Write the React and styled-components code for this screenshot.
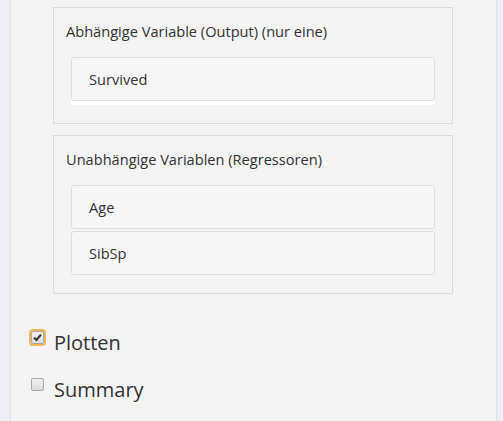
import React from "react";
import styled, { createGlobalStyle } from "styled-components";

const Global = createGlobalStyle`
  html, body { margin: 0; padding: 0; background: #ecf0f5; }
  body { font-family: "Open Sans", "Noto Sans", sans-serif; color: #333; }
`;

const Shell = styled.div`
  display: flex;
  height: 421px;
  padding: 0 6px 0 10px;
  overflow: hidden;
`;

const Panel = styled.div`
  flex: 1;
  background: #f4f4f4;
  border-left: 1px solid #dfe3e8;
  border-right: 1px solid #dfe3e8;
  display: flex;
  flex-direction: column;
  padding: 7px 0 0 20px;
`;

const Fieldsets = styled.div`
  display: flex;
  flex-direction: column;
  gap: 11px;
  padding-left: 22px;
`;

const Fieldset = styled.div`
  width: 400px;
  box-sizing: border-box;
  border: 1px solid #dcdcdc;
  padding: 13px 17px 18px 12px;
`;

const Legend = styled.div`
  font-size: 14.6px;
  line-height: 20px;
  margin-bottom: 16px;
`;

const List = styled.div`
  display: flex;
  flex-direction: column;
  gap: 2px;
  padding-left: 5px;
`;

const Item = styled.div`
  height: 44px;
  box-sizing: border-box;
  border: 1px solid #dedede;
  border-radius: 3px;
  background: #f7f7f7;
  display: flex;
  align-items: center;
  padding-left: 17px;
  font-size: 14.6px;
  box-shadow: ${(p) => (p.$raised ? "0 4px 0 #ffffff" : "none")};
  margin-bottom: ${(p) => (p.$raised ? "4px" : "0")};
`;

const Checks = styled.div`
  display: flex;
  flex-direction: column;
  gap: 23px;
  margin-top: 37px;
`;

const CheckRow = styled.label`
  display: flex;
  align-items: center;
  gap: 10px;
  font-size: 20px;
  line-height: 24px;
`;

const Box = styled.span`
  width: 13px;
  height: 13px;
  box-sizing: border-box;
  border-radius: 2px;
  border: 1px solid #a8a8a8;
  background: linear-gradient(#f0f0f0, #dcdcdc);
  margin-top: -12px;
  display: flex;
  align-items: center;
  justify-content: center;
  outline: ${(p) => (p.$focus ? "2px solid #f0b658" : "none")};
  outline-offset: 0;
`;

function Check({ checked, focus, children }) {
  return (
    <CheckRow>
      <Box $focus={focus}>
        {checked && (
          <svg width="9" height="9" viewBox="0 0 9 9">
            <path d="M1 4.6 L3.4 7 L8 1.6" fill="none" stroke="#333" strokeWidth="2" />
          </svg>
        )}
      </Box>
      <span>{children}</span>
    </CheckRow>
  );
}

export default function App() {
  return (
    <>
      <Global />
      <Shell>
        <Panel>
          <Fieldsets>
            <Fieldset>
              <Legend>Abhängige Variable (Output) (nur eine)</Legend>
              <List>
                <Item $raised>Survived</Item>
              </List>
            </Fieldset>
            <Fieldset>
              <Legend>Unabhängige Variablen (Regressoren)</Legend>
              <List>
                <Item>Age</Item>
                <Item>SibSp</Item>
              </List>
            </Fieldset>
          </Fieldsets>
          <Checks>
            <Check checked focus>Plotten</Check>
            <Check>Summary</Check>
          </Checks>
        </Panel>
      </Shell>
    </>
  );
}
